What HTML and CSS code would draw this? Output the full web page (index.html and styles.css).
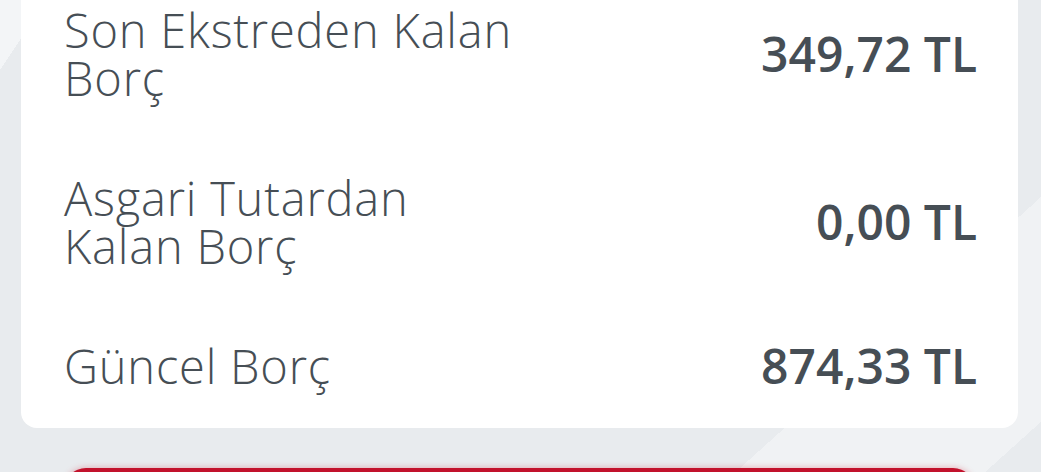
FILE: index.html
```html
<!DOCTYPE html>
<html lang="tr">
<head>
  <meta charset="utf-8">
  <link rel="stylesheet" href="styles.css">
</head>
<body>
  <div class="page">
    <div class="card">
      <div class="row">
        <span class="label">Son Ekstreden Kalan<br>Borç</span>
        <span class="value">349,72 TL</span>
      </div>
      <div class="row">
        <span class="label">Asgari Tutardan<br>Kalan Borç</span>
        <span class="value">0,00 TL</span>
      </div>
      <div class="row">
        <span class="label">Güncel Borç</span>
        <span class="value">874,33 TL</span>
      </div>
    </div>
    <div class="actions">
      <button type="button" class="pay"></button>
    </div>
  </div>
</body>
</html>
```

FILE: styles.css
```css
body {
  margin: 0;
  padding: 0;
  height: 472px;
  overflow: hidden;
  font-family: "Open Sans", Arial, sans-serif;
  background-color: #e8ebee;
  background-image:
    linear-gradient(124deg, #f3f5f7 0 39px, transparent 39px),
    linear-gradient(138deg, transparent 0 843px, #f0f2f4 843px 1010px, transparent 1010px);
}

.page {
  padding: 0 23px 0 21px;
}

.card {
  margin-top: -30px;
  padding-bottom: 2px;
  background: #fff;
  border-radius: 0 0 16px 16px;
}

.row {
  display: flex;
  justify-content: space-between;
  align-items: center;
  padding: 36px 41px 36px 43px;
}

.label {
  font-size: 47px;
  font-weight: 300;
  letter-spacing: 0.8px;
  line-height: 48px;
  color: #464e55;
}

.value {
  font-size: 48px;
  font-weight: 600;
  line-height: 48px;
  color: #464e55;
  white-space: nowrap;
}

.actions {
  padding: 40px 43px 0;
}

.pay {
  display: block;
  width: 100%;
  height: 80px;
  border: none;
  border-radius: 22px;
  background: #c2122c;
  box-shadow: 0 0 6px rgba(214, 30, 50, 0.35);
}
```
